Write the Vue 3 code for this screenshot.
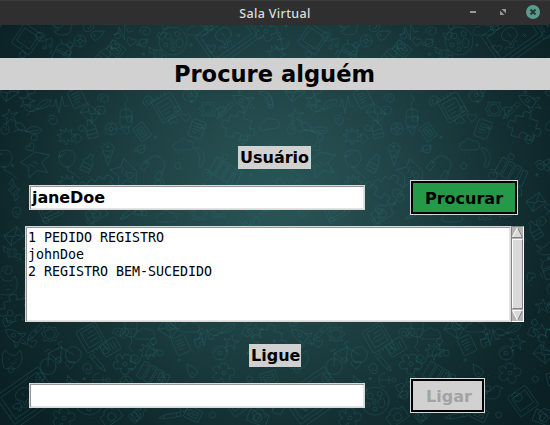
<script setup>
import { ref } from 'vue'

const user = ref('janeDoe')
const callee = ref('')
const log = ['1 PEDIDO REGISTRO', 'johnDoe', '2 REGISTRO BEM-SUCEDIDO']

// Line drawings of the wallpaper, each centred on 0,0
const shapes = {
  tablet: 'M-9-12h18q2 0 2 2v20q0 2-2 2h-18q-2 0-2-2v-20q0-2 2-2zM-8-8h16v15h-16zM-1 9.500h2',
  bird: 'M-11-5q6 4 10 1q3-7 8-3l3 1l-3 2q1 9-8 9q-7 0-9-4q4 0 5-2q-5-1-6-4z',
  notes: 'M-3 4v-7l6-2v7M-3 4a1.500 1.500 0 1 1-1-1M3 2a1.500 1.500 0 1 1-1-1',
  wheel: 'M-6 0a6 6 0 1 0 12 0a6 6 0 1 0-12 0M-2 0a2 2 0 1 0 4 0a2 2 0 1 0-4 0M0-6v4M0 2v4M-6 0h4M2 0h4',
  drop: 'M0-8q10 13 2 14q-10 2-2-14zM-1 2q1 2 3 1',
  planet: 'M-4 0a4 4 0 1 0 8 0a4 4 0 1 0-8 0M-4-1q-6 4 0 3q8-2 9-5q0-2-3-1',
  moon: 'M-14 0a14 14 0 1 0 28 0a14 14 0 1 0-28 0M-8-5a3 3 0 1 0 6 0a3 3 0 1 0-6 0M2-7a2 2 0 1 0 5 0a2 2 0 1 0-5 0M3 2a3 4 0 1 0 7 0a3 4 0 1 0-7 0M-9 4a2 2 0 1 0 4 0a2 2 0 1 0-4 0M-2 8a2 2 0 1 0 4 0a2 2 0 1 0-4 0M-2 1a1 2 0 1 0 3 0a1 2 0 1 0-3 0',
  robot: 'M-8 0q0-8 8-8t8 8zM-8 2h16v9h-16zM-5-8l-2-3M5-8l2-3M-11 2v6M11 2v6M-3-3v1M3-3v1',
  frame: 'M-8-6h16v12h-16zM-5-3h10v6h-10zM-4 2l3-3l2 2l3-2',
  laptop: 'M-26-20h52v34h-52zM-22-16h44v26h-44zM-32 18h64M-10-5q0-7 8-7t8 7t-8 6l-5 3l1-4zM-2-8v5M-14 5q3-4 5 0t5 0t5 0',
  heart: 'M0 4l-4-4q-2-4 2-4l2 2l2-2q4 0 2 4z',
  star: 'M0-7l2 5l6 0l-5 3l2 6l-5-4l-5 4l2-6l-5-3l6 0z',
  leaf: 'M-12 8q3-7 12-7q11-1 12-9q-12-2-14 9q-8-8-13-1q5 5 11 3M-2 2q5-4 11-8',
  pulse: 'M-10 1h5l2-7l3 14l3-17l2 10h5',
  phone: 'M-5-9h10q2 0 2 2v14q0 2-2 2h-10q-2 0-2-2v-14q0-2 2-2zM-4-5h8M-4-2h8M-4 1h8M-4 4h5',
  mail: 'M-8-6h16v12h-16zM-8-6l8 7l8-7M-8 6l6-6M8 6l-6-6',
  mouse: 'M0-9q6 0 6 6v7q0 6-6 6t-6-6v-7q0-6 6-6zM0-9v7M-6-1h12M0-9q-2-6 1-8t-3-7',
  notebook: 'M-10-12h20q2 0 2 2v20q0 2-2 2h-20zM-7-8h15v17h-15zM-5-3h10M-5 1h10M-5 5h7M-10-12l0-3M-6-12v-3M-2-12v-3M2-12v-3M6-12v-3',
  disc: 'M-7 0a7 7 0 1 0 14 0a7 7 0 1 0-14 0M-2 0a2 2 0 1 0 4 0a2 2 0 1 0-4 0M-5-1q1-4 5-4',
  sun: 'M-5 0a5 5 0 1 0 10 0a5 5 0 1 0-10 0M0-8l2 2l4-1l0 4l3 3l-3 3l0 4l-4-1l-2 2l-2-2l-4 1l0-4l-3-3l3-3l0-4l4 1z',
  pen: 'M-2-11h4v17l-2 5l-2-5zM-2-7h4M-2 6h4',
  rocket: 'M0-13q7 8 4 18h-8q-3-10 4-18zM-4 0l-5 6l5 0M4 0l5 6l-5 0M-2-3a2 2 0 1 0 4 0a2 2 0 1 0-4 0M-2 7l2 6l2-6',
  puzzle: 'M-12-8h7q-3-6 3-6t3 6h9v8q6-3 6 3t-6 3v7h-7q3-6-3-6t-3 6h-9v-8q-6 3-6-3t6-3z',
  splat: 'M0-7l2 4l4-3l-1 5l5 1l-5 3l2 4l-5-2l-2 5l-2-5l-5 2l2-5l-4-2l5-1l-2-5l5 3z',
  balloon: 'M0-10q9 0 8 9q-2 8-8 8t-8-8q-1-9 8-9zM-2 7h4l-2 3q8 3 13 9M-5-3q1-4 4-4',
  cone: 'M-5-4l5 15l5-15zM-5-4q-3-5 2-6q3-5 7 0q4 2 1 6M-3 0l6 3M3-3l-5 7',
  bottle: 'M-2-9h4v4q4 2 3 5v9h-10v-9q0-3 3-5zM-5 1h10M-5 5h10',
  headset: 'M-9 4v-5q0-9 9-9t9 9v5M-11 1h5v9h-5zM6 1h5v9h-5z',
  banana: 'M-6-10q13 5 6 19q-2 3-4 0q5-9-3-17z',
  cloud: 'M-8 5q-5-1-2-5q1-4 5-3q3-6 8-1q6-1 6 4q2 4-3 5z',
  books: 'M-14-8h6v17h-6zM-6-8h6v17h-6zM2-8h6v17h-6zM10-7l5-1l2 16l-5 1zM-12-5h2M-4-5h2M4-5h2',
  paper: 'M-15-7l17-5l13 8l-10 4l2 12l-9-6l-10 4l3-10zM-8-3l5 5M-3-4l4 5',
  candy: 'M-4-4h8v8h-8zM-4-4l-5-3l1 6l4 0M4 4l5 3l-1-6l-4 0M-2-4v8M2-4v8',
  cat: 'M-9 8q-4-13 1-18l5 5h6l4-5q5 10-1 16q-4 5-15 2zM-4-1v1M3-1v1M-2 3q2 2 4 0',
  bicycle: 'M-22 4a8 8 0 1 0 16 0a8 8 0 1 0-16 0M6 4a8 8 0 1 0 16 0a8 8 0 1 0-16 0M-14 4l6-12h14l8 12M-8-8l7 13l8-14M-11-11h6M6-8l-1-5h5',
  camera: 'M-10-5h5l2-3h6l2 3h5v12h-20zM-4 1a4 4 0 1 0 8 0a4 4 0 1 0-8 0M6-3h2',
  flower: 'M-2 0a2 2 0 1 0 4 0a2 2 0 1 0-4 0M-4-4q-2-6 4-6t4 6q6-3 7 2t-6 5q3 6-2 7t-5-5q-5 5-8 1t3-6q-6-3-3-6t6 2z',
  ring: 'M-3 0a3 3 0 1 0 6 0a3 3 0 1 0-6 0',
  swirl: 'M-5 2q-1-6 5-6t5 5q-1 4-5 3t-2-4t3 0',
  cross: 'M-2 0h4M0-2v4',
  anchor: 'M0-5v13M-7 2q1 7 7 6q6 1 7-6M-4-2h8M-2-7a2 2 0 1 0 4 0a2 2 0 1 0-4 0',
  dots: 'M-4-2h1M3 1h1M0 4h1'
}

const doodles = [
  ['tablet', 27, 39, 35], ['bird', 64, 30, 0], ['notes', 49, 43, 0], ['wheel', 80, 41, 0], ['drop', 97, 34, 70],
  ['pulse', 123, 32, -10], ['swirl', 145, 31, 0], ['planet', 143, 43, 0], ['moon', 173, 41, 0], ['robot', 63, 52, 25],
  ['frame', 116, 49, 38], ['laptop', 228, 38, -35], ['heart', 211, 49, 0], ['anchor', 281, 41, -15], ['bottle', 105, 54, 40],
  ['heart', 131, 42, 15], ['cloud', 198, 30, 0], ['flower', 266, 31, 0], ['splat', 276, 53, 10], ['candy', 158, 54, 0],
  ['star', 27, 101, 12], ['star', 10, 116, -10], ['leaf', 39, 108, 0], ['pulse', 59, 105, 0], ['phone', 77, 98, -25],
  ['mail', 90, 113, 40], ['mouse', 126, 118, 0], ['notebook', 166, 108, -30], ['disc', 190, 95, 0], ['sun', 208, 109, 0],
  ['pen', 225, 111, 45], ['rocket', 244, 102, -60], ['puzzle', 240, 126, 15], ['splat', 66, 135, 0], ['banana', 269, 98, -25],
  ['mail', 9, 92, -35], ['swirl', 103, 98, 0], ['wheel', 111, 129, 0], ['bottle', 91, 129, -15], ['frame', 142, 132, 55],
  ['phone', 197, 129, 20], ['cloud', 184, 145, 0], ['leaf', 28, 131, 30], ['cloud', 270, 124, -10], ['heart', 186, 118, 0],
  ['paper', 37, 164, -20], ['balloon', 67, 160, 0], ['bottle', 88, 163, 25], ['cone', 108, 155, 0], ['paper', 125, 175, 60],
  ['headset', 155, 166, 35], ['banana', 202, 157, 0], ['books', 225, 171, 30], ['balloon', 4, 160, 0],
  ['planet', 141, 149, 0], ['wheel', 263, 165, 0], ['puzzle', 105, 189, 30], ['splat', 67, 182, 0], ['candy', 14, 190, 45],
  ['notebook', 48, 207, -25], ['camera', 96, 213, -30], ['sun', 199, 213, 0], ['sun', 219, 210, 0], ['mail', 250, 202, -35],
  ['mail', 14, 236, -35], ['ring', 144, 213, 0], ['pen', 129, 213, 55], ['cloud', 167, 217, 0], ['leaf', 273, 209, 10],
  ['swirl', 7, 270, 0], ['candy', 12, 253, 0], ['bird', 261, 250, 0], ['robot', 264, 267, -20], ['cat', 8, 286, 0],
  ['disc', 268, 289, 0], ['puzzle', 17, 308, -10], ['star', 257, 306, 0], ['bottle', 249, 230, -30],
  ['rocket', 16, 337, -55], ['pen', 35, 332, 45], ['sun', 50, 334, 0], ['notebook', 92, 337, 150], ['mouse', 131, 328, 180],
  ['mail', 168, 329, 35], ['phone', 181, 345, -25], ['pulse', 204, 338, 0], ['leaf', 223, 332, 0], ['star', 231, 342, 10],
  ['disc', 220, 353, 0], ['bicycle', 59, 357, -25], ['pen', 98, 363, -42], ['flower', 125, 364, 20], ['ring', 160, 353, 0],
  ['swirl', 118, 332, 0], ['books', 153, 375, 30], ['flower', 224, 373, 0], ['cat', 13, 360, 0], ['heart', 70, 365, 0],
  ['heart', 32, 344, 0], ['laptop', 28, 398, -35], ['moon', 89, 401, 0], ['anchor', 101, 380, 90], ['drop', 191, 371, -30],
  ['wheel', 126, 382, 0], ['camera', 111, 416, -35], ['bottle', 138, 414, 50], ['cloud', 145, 334, 0], ['planet', 118, 395, 0],
  ['pen', 170, 416, 80], ['frame', 193, 414, 25], ['tablet', 237, 401, -35], ['bird', 207, 394, 0], ['mail', 257, 354, 40],
  ['frame', 269, 378, -15], ['star', 256, 331, 0], ['cloud', 190, 327, 0], ['swirl', 155, 395, 0], ['robot', 178, 394, 15],
  ['flower', 64, 418, 0], ['camera', 258, 417, 20], ['cone', 275, 403, 150], ['phone', 110, 347, 60], ['splat', 148, 350, 0],
  ['candy', 74, 385, 20], ['puzzle', 271, 339, 10]
]

// Small marks scattered between the drawings
const kinds = ['cross', 'ring', 'dots', 'heart', 'swirl', 'dots']
const specks = Array.from({ length: 210 }, (_, i) => [
  kinds[i % kinds.length], (i * 176.77) % 286, 26 + ((i * 83.31) % 398), (i * 47) % 360
])
const marks = [...doodles, ...specks]
</script>

<template>
  <div class="window">
    <header class="titlebar">
      <span class="title">Sala Virtual</span>
      <div class="controls">
        <svg width="8" height="8"><path d="M1 3h6v2H1z" fill="#999" /></svg>
        <svg width="8" height="8"><path d="M2.500 1H7v4.500zM1 2.500V7h4.500z" fill="#969696" /></svg>
        <svg width="14" height="14">
          <circle cx="7" cy="7" r="7" fill="#579c8e" />
          <path d="M4.500 4.500l5 5M9.500 4.500l-5 5" stroke="#2c3432" stroke-width="1.900" />
        </svg>
      </div>
    </header>

    <main class="body">
      <svg class="wallpaper" width="550" height="400" viewBox="0 25 550 400">
        <g id="tile">
          <path
            v-for="(m, i) in marks"
            :key="i"
            :d="shapes[m[0]]"
            :transform="`translate(${m[1]} ${m[2]}) rotate(${m[3]})`"
          />
        </g>
        <use href="#tile" x="286" />
      </svg>

      <div class="content">
        <h1 class="banner">Procure alguém</h1>
        <label class="label user-label">Usuário</label>
        <div class="row user-row">
          <input v-model="user" class="entry" type="text" />
          <button class="button search">Procurar</button>
        </div>
        <div class="list">
          <div class="lines">
            <div v-for="line in log" :key="line">{{ line }}</div>
          </div>
          <div class="scrollbar">
            <svg width="11" height="11">
              <path d="M5.500 0.500L10.500 10.500H0.500z" fill="#d9d9d9" />
              <path d="M5.500 0.500L10.500 10.500H0" stroke="#828282" fill="none" />
              <path d="M5.500 0.500L0.500 10" stroke="#fff" fill="none" />
            </svg>
            <div class="thumb"></div>
            <svg width="11" height="11">
              <path d="M0.500 0.500H10.500L5.500 10.500z" fill="#d9d9d9" />
              <path d="M10.500 0.500L5.500 10.500" stroke="#828282" fill="none" />
              <path d="M10.500 0.500H0.500L5.500 10.500" stroke="#fff" fill="none" />
            </svg>
          </div>
        </div>
        <label class="label call-label">Ligue</label>
        <div class="row">
          <input v-model="callee" class="entry" type="text" />
          <button class="button call" disabled>Ligar</button>
        </div>
      </div>
    </main>
  </div>
</template>

<style>
body {
  overflow: hidden;
}
</style>

<style scoped>
.window {
  width: 550px;
  height: 425px;
  overflow: hidden;
  font-family: "DejaVu Sans", sans-serif;
  color: #000;
}
.window * {
  box-sizing: border-box;
}
.titlebar {
  display: grid;
  grid-template-columns: 1fr auto 1fr;
  align-items: start;
  height: 25px;
  padding: 0 10px;
  background: #2f2f2f;
  border-top: 1px solid #3b3b3b;
}
.title {
  grid-column: 2;
  padding-top: 1px;
  font: 500 12.500px "Noto Sans", sans-serif;
  line-height: 24px;
  letter-spacing: 0.35px;
  color: #dedede;
}
.controls {
  display: flex;
  justify-content: flex-end;
  align-items: center;
  gap: 22px;
  height: 22px;
}
.controls svg:last-child {
  margin-left: -3px;
}
.body {
  position: relative;
  height: 400px;
  background: radial-gradient(circle at 275px 170px, #295656 0, #24494b 90px, #1b3c3e 170px, #10292d 265px, #0a2024 330px);
}
.wallpaper {
  position: absolute;
  inset: 0;
  fill: none;
  stroke: #2f7778;
  stroke-width: 0.8;
  stroke-opacity: 0.33;
}
.content {
  position: relative;
  display: flex;
  flex-direction: column;
  padding-top: 33px;
}
.banner {
  margin: 0;
  height: 32px;
  background: #d1d1d1;
  text-align: center;
  font-size: 22.600px;
  line-height: 32px;
  font-weight: bold;
  padding-right: 1px;
}
.label {
  height: 23px;
  padding: 0 2px;
  background: #d1d1d1;
  font-size: 16px;
  line-height: 23px;
  font-weight: bold;
}
.user-label {
  margin: 56px 0 11px 238px;
  width: 73px;
}
.call-label {
  margin: 22px 0 11px 249px;
  width: 52px;
}
.row {
  display: flex;
  align-items: center;
  gap: 45px;
  height: 35px;
  padding-left: 29px;
}
.user-row {
  margin-bottom: 11px;
}
.entry {
  width: 336px;
  height: 25px;
  padding: 0 0 1px 0;
  border: 1px solid #d9d9d9;
  box-shadow: inset 1px 1px #9b9696, inset -1px -1px #e3e3e3;
  text-indent: 2px;
  border-radius: 0;
  background: #fff;
  font: bold 16px "DejaVu Sans", sans-serif;
  letter-spacing: -0.1px;
  color: #000;
}
.button {
  height: 35px;
  padding: 2px 0 0;
  border: 1px solid #d9d9d9;
  border-radius: 0;
  box-shadow: inset 0 0 0 2px #000;
  font: bold 16px "DejaVu Sans", sans-serif;
  color: #000;
}
.search {
  width: 108px;
  background: #249947;
}
.call {
  width: 75px;
  padding-left: 3px;
  background: #d1d1d1;
  color: #a3a3a3;
}
.list {
  display: flex;
  width: 499px;
  height: 96px;
  margin-left: 25px;
}
.lines {
  flex: 1;
  padding: 2px;
  border: 1px solid #d9d9d9;
  box-shadow: inset 1px 1px #9b9696, inset -1px -1px #e3e3e3;
  background: #fff;
  font: 13.330px/17px "DejaVu Sans Mono", monospace;
  letter-spacing: -0.02px;
}
.scrollbar {
  display: flex;
  flex-direction: column;
  width: 13px;
  border-left: 1px solid #828282;
  border-top: 1px solid #828282;
  border-right: 1px solid #fff;
  border-bottom: 1px solid #fff;
  background: #b3b3b3;
}
.scrollbar svg {
  display: block;
}
.thumb {
  flex: 1;
  margin: 1px 0;
  background: #d9d9d9;
  border: 1px solid;
  border-color: #fff #828282 #828282 #fff;
}
</style>
